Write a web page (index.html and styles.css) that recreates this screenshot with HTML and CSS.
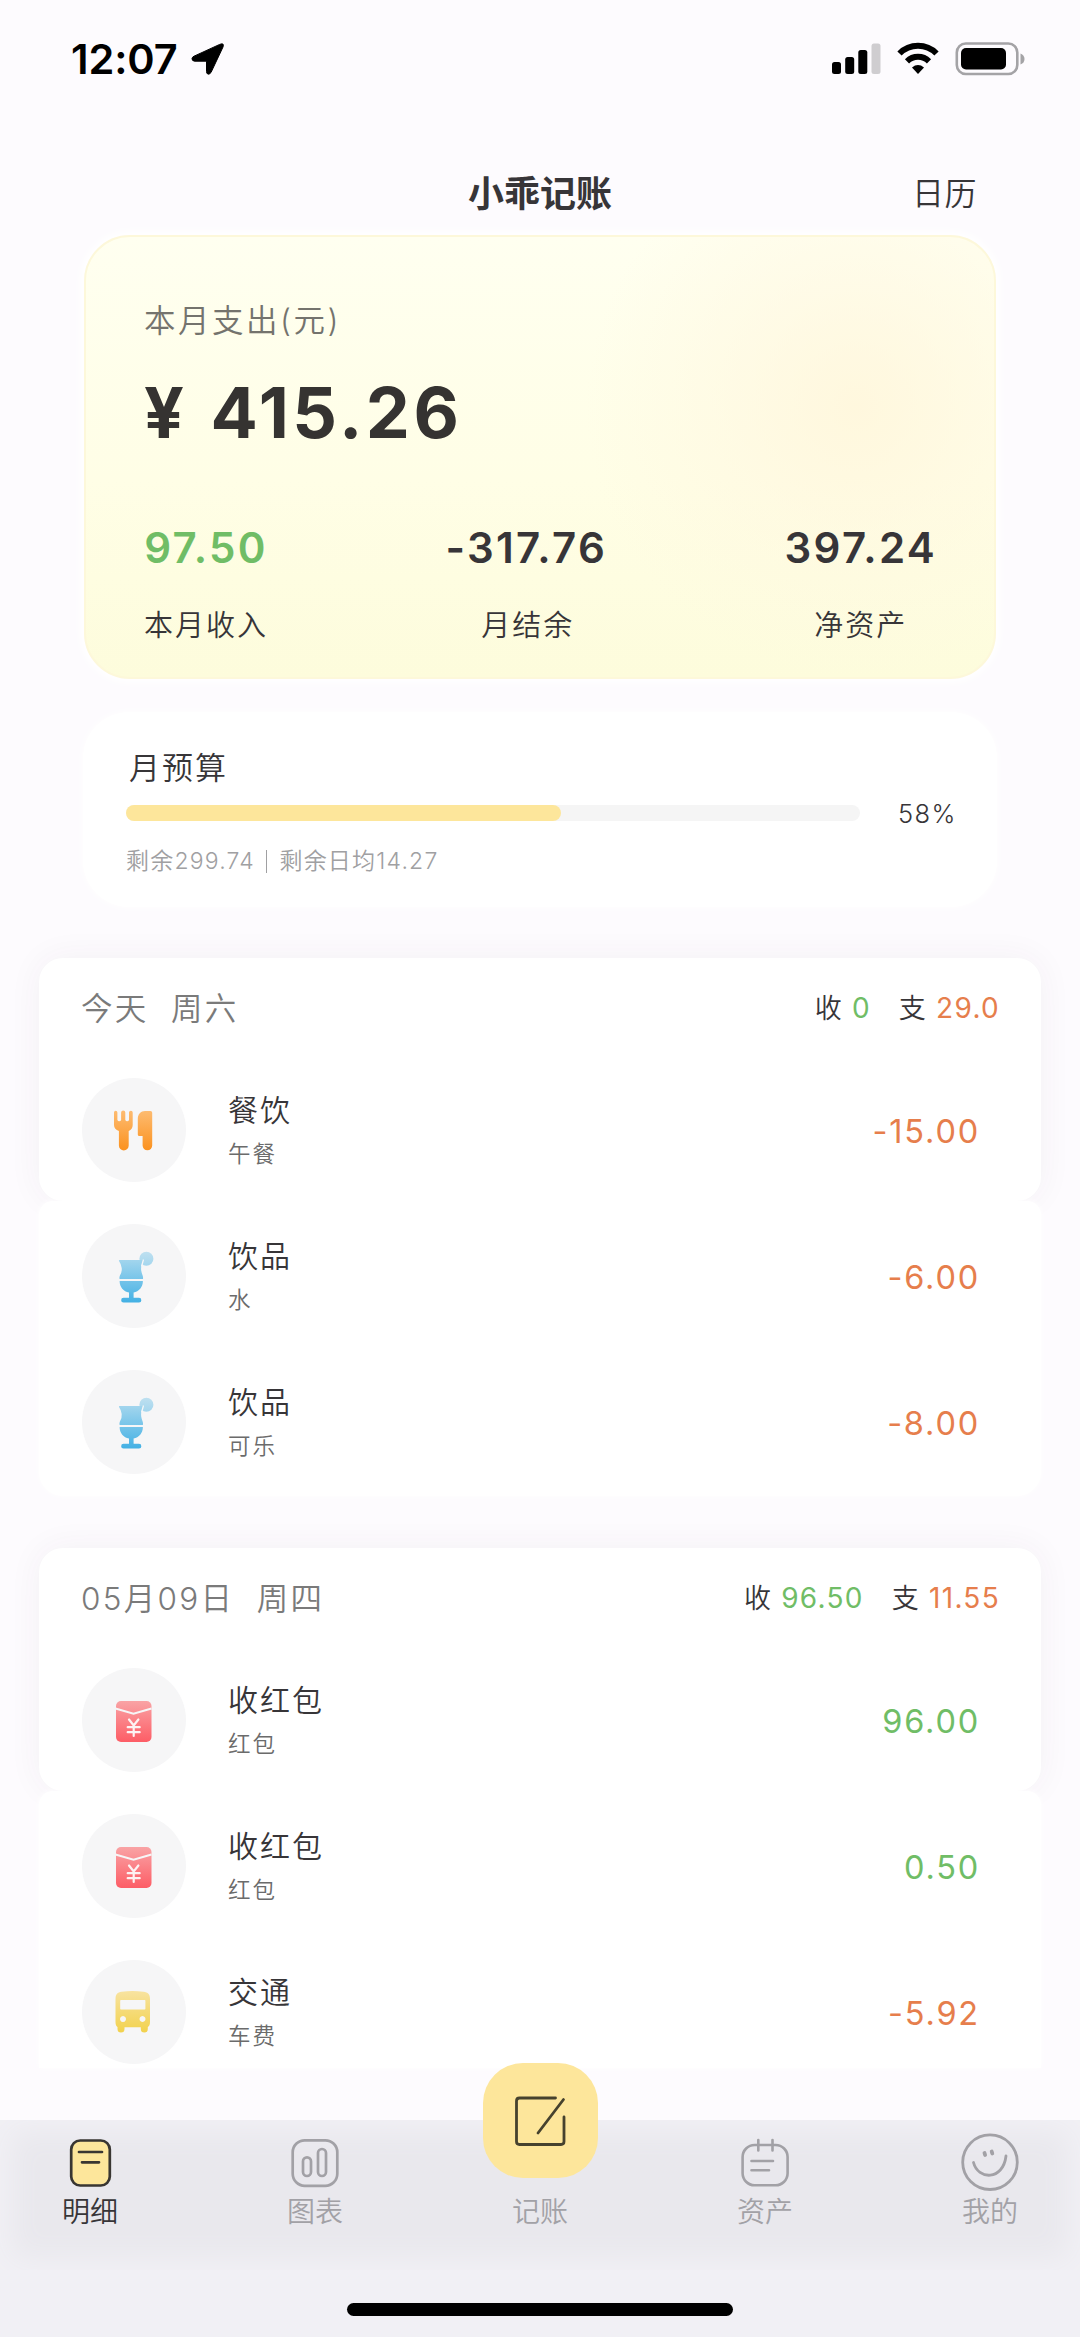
FILE: index.html
```html
<!DOCTYPE html>
<html lang="zh-CN">
<head>
<meta charset="utf-8">
<title>小乖记账</title>
<link rel="stylesheet" href="styles.css">
</head>
<body>
<svg class="defs" width="0" height="0" aria-hidden="true">
  <defs>
    <linearGradient id="orange" x1="0" y1="33" x2="0" y2="72" gradientUnits="userSpaceOnUse"><stop offset="0" stop-color="#fdbb70"/><stop offset="1" stop-color="#fb9220"/></linearGradient>
    <linearGradient id="blue" x1="0" y1="28" x2="0" y2="79" gradientUnits="userSpaceOnUse"><stop offset="0" stop-color="#b4dcef"/><stop offset="1" stop-color="#42b0e4"/></linearGradient>
    <linearGradient id="red" x1="0" y1="33" x2="0" y2="74" gradientUnits="userSpaceOnUse"><stop offset="0" stop-color="#f9a3a5"/><stop offset="1" stop-color="#fd5d66"/></linearGradient>
    <linearGradient id="yellow" x1="0" y1="31" x2="0" y2="72" gradientUnits="userSpaceOnUse"><stop offset="0" stop-color="#f8e3a0"/><stop offset="1" stop-color="#f2d24e"/></linearGradient>
    <symbol id="meal" viewBox="0 0 104 104">
      <g fill="url(#orange)">
        <path d="M32 34.500a1.700 1.700 0 0 1 3.400 0V42a2 2 0 0 0 3.700 0V34.500a2.100 2.100 0 0 1 4.200 0V42a2 2 0 0 0 3.700 0V34.500a1.700 1.700 0 0 1 3.700 0V47c0 3-1.500 5-4 6V67.500a4.700 4.700 0 0 1-9.800 0V53c-3-1-4.900-3-4.900-6z"/>
        <path d="M63 33h5.500q1.700 0 1.700 1.700V67.500a4.700 4.700 0 0 1-9.600 0V58H57.300q-1.500 0-1.500-1.500V41c0-5 3-8 7.200-8z"/>
      </g>
    </symbol>
    <symbol id="drink" viewBox="0 0 104 104">
      <g fill="url(#blue)">
        <circle cx="64.400" cy="34.700" r="7" opacity=".85"/>
        <path d="M37.500 36H60.500q1 0 .6 1C60 40 58.600 43 59.200 46.500q.5 3 1.600 5.500.6 2.500 0 3H37.700q-.6-.5 0-3 2.500-4 2-8T37 37q-.4-1 .5-1z"/>
        <path d="M37.600 57H60.900c0 6-4 10.500-9.300 11.500v5.300H57a2.300 2.300 0 0 1 0 4.700H41.500a2.300 2.300 0 0 1 0-4.700H47v-5.300C41.500 67.500 37.600 63 37.600 57z"/>
      </g>
      <path d="M61.500 35.500l-2 7" stroke="#f6f6f7" stroke-width="1.300" fill="none"/>
    </symbol>
    <symbol id="packet" viewBox="0 0 104 104">
      <rect x="34" y="33" width="35.500" height="41" rx="5" fill="url(#red)"/>
      <path d="M33.500 40.500l18 5.300 18-5.300" fill="none" stroke="#f6f6f7" stroke-width="2"/>
      <path d="M47 51.500l4.700 6 4.700-6M51.700 57.500V68M45.700 59.200H57.700M45.700 64.200H57.700" fill="none" stroke="#fdf3f3" stroke-width="2.200" stroke-linecap="round"/>
    </symbol>
    <symbol id="bus" viewBox="0 0 104 104">
      <path fill="url(#yellow)" fill-rule="evenodd" d="M33.500 39c0-5 2-6.500 6-7.200q11-1.800 22 0c4.500.7 6.500 2.200 6.500 7.200V62q0 4-2.200 5v2a3 3 0 0 1-7 0v-1.700H42.500V69a3 3 0 0 1-7 0v-2q-2-1-2-5zM39 40q-.8 0-.8.800V48.700q0 .8.800.8H62.600q.8 0 .8-.8V40.800q0-.8-.8-.8zM41 56a3 3 0 1 0 .01 0zM60.500 56a3 3 0 1 0 .01 0z"/>
    </symbol>
  </defs>
</svg>

<div class="screen">
  <header class="status">
    <div class="clock">12:07
      <svg class="arrow" width="34" height="34" viewBox="0 0 34 34"><path d="M28.700 2.400Q33.500.5 32 5L20 30.500Q18 33.500 16 31.500 15.500 31 15.500 29.500V19.200H3.500Q.8 18.800 1 16.500 1.200 15 3 14.200z" stroke="#000" stroke-width="1"/></svg>
    </div>
    <svg class="signals" width="194" height="34" viewBox="0 0 194 34">
      <rect x="1" y="20" width="9" height="12" rx="2.500"/>
      <rect x="14.200" y="15" width="9" height="17" rx="2.500"/>
      <rect x="27.300" y="8" width="9" height="24" rx="2.500"/>
      <rect x="40.500" y="1.500" width="9" height="30.500" rx="2.500" fill="#cfcdd0"/>
      <g fill="none" stroke="#000" stroke-width="6"><path d="M68.500 11.500A26 26 0 0 1 105.500 11.500"/><path d="M76 19.300A15.800 15.800 0 0 1 98 19.300"/></g>
      <path d="M81 25.500q6-4.800 12 0L87 32z"/>
      <rect x="125.800" y="1.500" width="60.500" height="30.500" rx="9" fill="none" stroke="#a4a3a6" stroke-width="2.600"/>
      <rect x="130" y="6" width="45" height="21.500" rx="5"/>
      <path d="M189.500 11.500q4 1.500 4 5.500t-4 5.500z" fill="#a4a3a6"/>
    </svg>
  </header>

  <nav class="topbar"><span></span><h1>小乖记账</h1><a class="calendar">日历</a></nav>

  <section class="summary">
    <p class="summary-label">本月支出(元)</p>
    <p class="summary-total">¥ 415.26</p>
    <div class="stats">
      <div class="stat"><b class="in">97.50</b><span>本月收入</span></div>
      <div class="stat"><b>-317.76</b><span>月结余</span></div>
      <div class="stat"><b>397.24</b><span>净资产</span></div>
    </div>
  </section>

  <section class="budget">
    <h2>月预算</h2>
    <div class="meter"><div class="track"><div class="fill" style="width:59.200%"></div></div><span>58%</span></div>
    <p class="remain"><span>剩余299.74</span><i></i><span>剩余日均14.27</span></p>
  </section>

  <section class="day">
    <div class="day-top">
      <div class="day-head"><h3>今天&nbsp; 周六</h3><p class="sum">收 <em class="in">0</em></p><p class="sum">支 <em class="out">29.0</em></p></div>
      <div class="entry"><svg class="badge"><use href="#meal"/></svg><div class="what"><b>餐饮</b><span>午餐</span></div><em class="out">-15.00</em></div>
    </div>
    <div class="day-rest">
      <div class="entry"><svg class="badge"><use href="#drink"/></svg><div class="what"><b>饮品</b><span>水</span></div><em class="out">-6.00</em></div>
      <div class="entry"><svg class="badge"><use href="#drink"/></svg><div class="what"><b>饮品</b><span>可乐</span></div><em class="out">-8.00</em></div>
    </div>
  </section>

  <section class="day last">
    <div class="day-top">
      <div class="day-head"><h3>05月09日&nbsp; 周四</h3><p class="sum">收 <em class="in">96.50</em></p><p class="sum">支 <em class="out">11.55</em></p></div>
      <div class="entry"><svg class="badge"><use href="#packet"/></svg><div class="what"><b>收红包</b><span>红包</span></div><em class="in">96.00</em></div>
    </div>
    <div class="day-rest">
      <div class="entry"><svg class="badge"><use href="#packet"/></svg><div class="what"><b>收红包</b><span>红包</span></div><em class="in">0.50</em></div>
      <div class="entry"><svg class="badge"><use href="#bus"/></svg><div class="what"><b>交通</b><span>车费</span></div><em class="out">-5.92</em></div>
    </div>
  </section>

  <footer class="tabbar">
    <div class="tabs">
      <a class="tab active"><svg width="60" height="60" viewBox="0 0 60 60"><rect x="11.200" y="8.500" width="38.600" height="45" rx="9" fill="#fde69b" stroke="#393632" stroke-width="2.700"/><path d="M19 20H42M22 30.300H39" stroke="#393632" stroke-width="2.700" stroke-linecap="round"/></svg>明细</a>
      <a class="tab"><svg width="60" height="60" viewBox="0 0 60 60"><g fill="none" stroke="#a2a1a6" stroke-width="2.700"><rect x="7.700" y="8.300" width="44.600" height="45.500" rx="12"/><rect x="18" y="25.300" width="8" height="18.700" rx="4"/><rect x="33" y="17" width="8" height="27" rx="4"/></g></svg>图表</a>
      <a class="tab"><span class="compose"><svg width="60" height="60" viewBox="0 0 60 60"><path d="M45.500 7H9.500Q6.500 7 6.500 10V50.500Q6.500 53.500 9.500 53.500H51Q54 53.500 54 50.500V26M53.500 8.500L28 42" fill="none" stroke="#46422e" stroke-width="2.800" stroke-linecap="round"/></svg></span>记账</a>
      <a class="tab"><svg width="60" height="60" viewBox="0 0 60 60"><g fill="none" stroke="#a2a1a6" stroke-width="2.600"><rect x="7.600" y="13" width="45" height="40.300" rx="12"/><path d="M23.300 8V18.500M37.500 8V18.500M16.500 29H38M16.500 38.300H34" stroke-linecap="round"/></g></svg>资产</a>
      <a class="tab"><svg width="60" height="60" viewBox="0 0 60 60"><circle cx="30" cy="30.200" r="27.300" fill="none" stroke="#a2a1a6" stroke-width="2.800"/><path d="M13.500 30.500C18 48 43 49 46 24" fill="none" stroke="#a2a1a6" stroke-width="2.800" stroke-linecap="round"/><path d="M24.500 21l.6 2M31.700 19.500l.6 2" stroke="#a2a1a6" stroke-width="3.800" stroke-linecap="round"/></svg>我的</a>
    </div>
    <div class="home"></div>
  </footer>
</div>
</body>
</html>
```
FILE: styles.css
```css
* { box-sizing: border-box; margin: 0; padding: 0; }
body { background: #fdfbfe; color: #373538; font-family: Inter, "Noto Sans CJK SC", sans-serif; font-weight: 350; }
em { font-style: normal; }
.defs { display: block; }
.screen { width: 1080px; height: 2337px; display: flex; flex-direction: column; overflow: hidden; }
.in { color: #70bd66; }
.out { color: #e67e4c; }

/* status bar */
.status { height: 118px; padding: 0 55px 0 71px; display: flex; justify-content: space-between; align-items: center; color: #000; }
.clock { display: flex; align-items: center; gap: 13px; font-size: 41.500px; font-weight: 600; line-height: 60px; letter-spacing: -.1px; }

.topbar { margin-top: 31px; height: 84px; padding: 0 103px 0 103px; display: grid; grid-template-columns: 1fr auto 1fr; align-items: center; }
.topbar h1 { font-size: 36px; font-weight: 700; }
.calendar { justify-self: end; font-size: 32px; letter-spacing: .5px; }

/* monthly summary */
.summary { margin: 2px 84px 0; height: 444px; padding: 66px 57px 0 58px; border-radius: 46px; border: 2px solid #fdf8da; box-shadow: 0 0 8px 4px #fff;
  background: radial-gradient(circle 270px at 770px 170px, rgba(255,245,218,.75), rgba(255,246,222,.45) 45%, rgba(255,249,228,0)), linear-gradient(#fffff0, #fffee6 55%, #fdfcdc); }
.summary-label { font-size: 31.500px; line-height: 40px; letter-spacing: 2.500px; color: #74736d; margin-top: -2px; }
.summary-total { margin-top: 32px; font-size: 70px; font-weight: 700; line-height: 80px; letter-spacing: 3.500px; word-spacing: 3px; color: #353331; }
.stats { margin-top: 70px; display: flex; justify-content: space-between; }
.stat { display: flex; flex-direction: column; align-items: center; gap: 33px; }
.stat b { font-size: 42px; font-weight: 600; line-height: 50px; letter-spacing: 2.300px; }
.stat span { font-size: 29px; line-height: 40px; letter-spacing: 2px; }
.stat:nth-child(2) span { padding-left: 3px; }

/* budget */
.budget { margin: 33px 83px 0; height: 195px; padding: 36px 40px 0 43px; border-radius: 46px; background: #fff; box-shadow: 0 0 10px #fff; }
.budget h2 { font-size: 31px; font-weight: 350; line-height: 40px; letter-spacing: 2px; padding-left: 3px; }
.meter { margin-top: 13px; height: 24px; display: flex; align-items: center; justify-content: space-between; font-size: 25.500px; letter-spacing: 1.500px; }
.track { width: 734px; height: 16px; border-radius: 8px; background: #f5f5f5; }
.fill { height: 16px; border-radius: 8px; background: #fde69b; }
.remain { margin-top: 21px; line-height: 30px; font-size: 23px; letter-spacing: 1.200px; color: #a0a0a2; display: flex; align-items: center; }
.remain i { width: 1.500px; height: 23px; margin: 0 12px 0 11px; background: #a0a0a2; }

/* daily records */
.day { margin: 51px 39px 0; height: 538px; }
.day.last { margin-top: 52px; height: 520px; }
.day-top { height: 243px; border-radius: 24px; background: #fff; box-shadow: 0 0 34px rgba(70,50,80,.055); }
.day-rest { position: relative; height: 295px; padding-top: 2px; background: #fff; border-radius: 14px 14px 24px 24px; box-shadow: 0 0 6px #fff; }
.last .day-rest { height: 277px; border-radius: 14px 14px 0 0; }
.day-head { height: 101px; padding: 0 41px 0 42px; display: flex; align-items: center; }
.day-head h3 { flex: 1; font-size: 31.500px; font-weight: 350; letter-spacing: 2.300px; line-height: 40px; color: #7a7a7a; }
.sum { font-size: 27px; letter-spacing: 1.300px; line-height: 40px; margin-left: 28px; }
.sum em { font-size: 28px; font-weight: 400; }
.entry { height: 146px; padding: 0 61px 0 43px; display: flex; align-items: center; }
.day-top .entry { height: 142px; }
.badge { width: 104px; height: 104px; border-radius: 50%; background: #f6f6f7; }
.what { flex: 1; padding-left: 42px; display: flex; flex-direction: column; gap: 11px; }
.what b { font-size: 30px; font-weight: 350; line-height: 36px; letter-spacing: 2px; }
.what span { font-size: 22.500px; line-height: 30px; letter-spacing: 2px; color: #6b6b6b; }
.entry em { font-size: 32.500px; letter-spacing: 1.800px; font-weight: 400; line-height: 40px; padding-top: 3px; }

/* tab bar */
.tabbar { position: relative; margin-top: 52px; height: 217px; background: #f1f0f5; display: flex; flex-direction: column; align-items: center; }
.tabs { width: 1080px; height: 150px; padding: 12px 60px 0; display: flex; justify-content: space-between; background: #e9e8ed; box-shadow: inset 0 0 28px 12px #f1f0f5; }
.tab { width: 60px; display: flex; flex-direction: column; align-items: center; font-size: 28px; line-height: 41px; color: #a2a1a6; white-space: nowrap; }
.tab svg { flex: none; }
.active { color: #373538; }
.compose { width: 115px; height: 115px; margin: -69px 0 14px; border-radius: 40px; background: #fde69b; display: flex; align-items: center; justify-content: center; }
.home { margin-top: 33px; width: 386px; height: 13px; border-radius: 7px; background: #000; }
```
